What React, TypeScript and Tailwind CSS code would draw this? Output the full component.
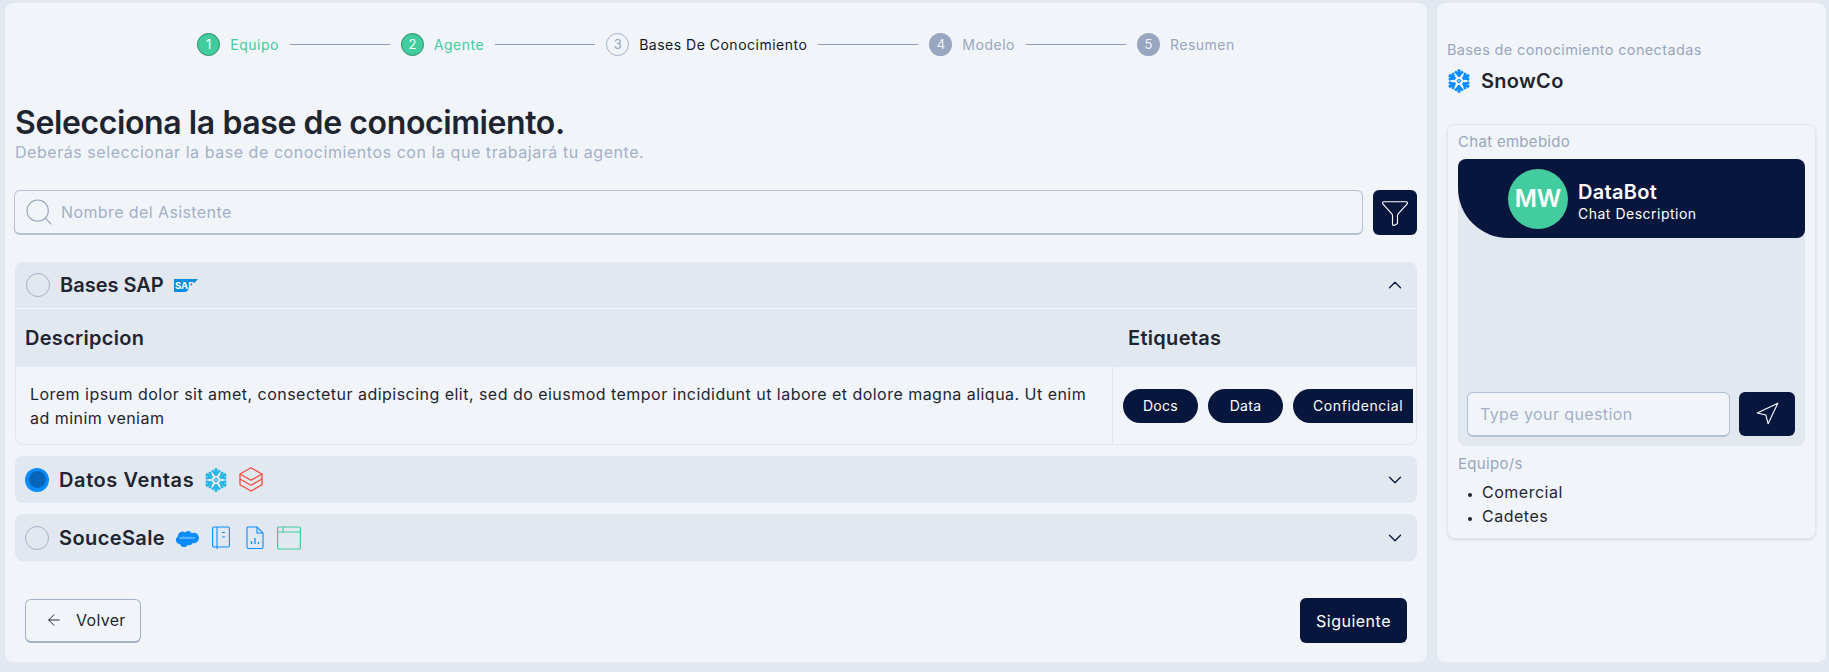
import { ArrowLeft, ChevronDown, ChevronUp, Filter, Navigation, Search } from "lucide-react";

const navy = "bg-[#07163d]";

function Snowflake({ color, size = 24 }: { color: string; size?: number }) {
  return (
    <svg width={size} height={size} viewBox="0 0 24 24" stroke={color} fill="none">
      {[0, 60, 120, 180, 240, 300].map((a) => (
        <g key={a} transform={`rotate(${a} 12 12)`}>
          <path d="M12 0.3v7.4" strokeWidth="3" />
          <path d="M8.100 2.400 12 6.300l3.900-3.900" strokeWidth="2.600" />
        </g>
      ))}
      <path d="M12 10.200 13.800 12 12 13.800 10.200 12Z" strokeWidth="1.100" />
    </svg>
  );
}

function Step({ n, label, state }: { n: number; label: string; state: "done" | "current" | "todo" }) {
  const circle =
    state === "done"
      ? "bg-[#43cc9e] border border-[#2a8a6c] text-white"
      : state === "current"
        ? "border border-[#a3b0c8] text-[#94a3b8]"
        : "bg-[#98a6bf] text-[#f1f5f9]";
  const text = state === "done" ? "text-[#43cc9e]" : state === "current" ? "text-[#111827]" : "text-[#98a6bf]";
  return (
    <div className="flex items-center gap-[10px]">
      <span className={`flex h-[23px] w-[23px] items-center justify-center rounded-full text-[13px] ${circle}`}>{n}</span>
      <span className={`text-[14px] tracking-[0.5px] ${text}`}>{label}</span>
    </div>
  );
}

function Line() {
  return <div className="mx-[11px] h-px w-[100px] bg-[#8c9cb8]" />;
}

function Radio({ checked }: { checked?: boolean }) {
  if (checked) {
    return (
      <span className="flex h-6 w-6 items-center justify-center rounded-full bg-[#0a8cff]">
        <span className="h-[17px] w-[17px] rounded-full bg-[#0665b8]" />
      </span>
    );
  }
  return <span className="h-6 w-6 rounded-full border border-[#a3b0c8]" />;
}

function Pill({ label, className }: { label: string; className: string }) {
  return (
    <span className={`flex h-[34px] items-center rounded-full ${navy} text-[14px] text-white ${className}`}>
      {label}
    </span>
  );
}

function SapLogo() {
  return (
    <svg width="24" height="13" viewBox="0 0 24 13">
      <path d="M0 0h24L12 13H0Z" fill="#0a8fe0" />
      <text x="1" y="9.500" fontSize="9.500" fontWeight="700" fill="#fff" fontFamily="Inter, sans-serif">
        SAP
      </text>
    </svg>
  );
}

function Layers() {
  return (
    <svg width="24" height="25" viewBox="0 0 24 25" fill="none" stroke="#ef4a3a" strokeWidth="1.3" strokeLinejoin="round">
      <path d="M12 0.800 23 7 12 13.200 1 7Z" />
      <path d="M1 7v5l11 6.200 11-6.200V7" />
      <path d="M1 12v5.800L12 24l11-6.200V12" />
    </svg>
  );
}

function Salesforce() {
  return (
    <svg width="24" height="17" viewBox="0 0 24 17" className="mt-[1px]">
      <path
        d="M10 2.4A4.2 4.2 0 0 1 13 1a4.3 4.3 0 0 1 3.7 2.2 5 5 0 0 1 2-.4A5.2 5.2 0 0 1 24 8a5.2 5.2 0 0 1-6.2 5.1 3.8 3.8 0 0 1-5 1.6A4.3 4.3 0 0 1 4.8 14 4 4 0 0 1 2.800 6.600 4.600 4.600 0 0 1 10 2.400Z"
        fill="#0a8cff"
      />
      <text x="12" y="9.300" textAnchor="middle" fontSize="3.200" fill="#cfe8ff" fontFamily="Inter, sans-serif">
        salesforce
      </text>
    </svg>
  );
}

function BookIcon() {
  return (
    <svg width="18" height="24" viewBox="0 0 18 24" fill="none" stroke="#0a8cff" strokeWidth="1.100">
      <rect x="0.6" y="1" width="16.800" height="20" rx="1.500" />
      <path d="M5 1v22" />
      <path d="M10 6.500h3M10 11h3" />
    </svg>
  );
}

function FileIcon() {
  return (
    <svg width="18" height="24" viewBox="0 0 18 24" fill="none" stroke="#0a8cff" strokeWidth="1.100">
      <path d="M2 1h9l6 6v14a1.500 1.500 0 0 1-1.500 1.500h-13A1.500 1.500 0 0 1 1 21V2a1 1 0 0 1 1-1Z" />
      <path d="M11 1v6h6" />
      <path d="M5.500 18v-3M9 18v-6M12.500 18v-2" strokeWidth="1.300" />
    </svg>
  );
}

function WindowIcon() {
  return (
    <svg width="24" height="24" viewBox="0 0 24 24" fill="none" stroke="#43cc9e" strokeWidth="1.200">
      <rect x="0.600" y="1" width="22.800" height="22" rx="1" />
      <path d="M0.600 6h22.800M6 1v5" />
    </svg>
  );
}

function Row({ name, checked, icons, nameClass }: { name: string; checked?: boolean; icons: React.ReactNode; nameClass: string }) {
  return (
    <div className="flex h-[47px] items-center rounded-lg bg-[#e2e8f0] pl-[10px] pr-[11px]">
      <Radio checked={checked} />
      <span className={`ml-[10px] text-[20px] font-semibold text-[#1f2530] ${nameClass}`}>{name}</span>
      <div className="ml-[10px] flex items-center">{icons}</div>
      <ChevronDown size={22} strokeWidth={1.4} className="ml-auto text-[#07163d]" />
    </div>
  );
}

export default function App() {
  return (
    <div className="flex h-[672px] w-[1829px] gap-[10px] overflow-hidden bg-[#e2e8f0] pb-[10px] pl-[5px] pr-[3px] pt-[3px] font-['Inter',sans-serif]">
      <main className="flex w-[1423px] flex-col rounded-lg bg-[#f1f5f9] pl-[10px] pr-[10px]">
        <div className="mt-[30px] flex items-center justify-center">
          <Step n={1} label="Equipo" state="done" />
          <Line />
          <Step n={2} label="Agente" state="done" />
          <Line />
          <Step n={3} label="Bases De Conocimiento" state="current" />
          <Line />
          <Step n={4} label="Modelo" state="todo" />
          <Line />
          <Step n={5} label="Resumen" state="todo" />
        </div>

        <h1 className="mt-[48px] text-[32px] font-semibold leading-[38px] tracking-[-0.4px] text-[#1f2530]">Selecciona la base de conocimiento.</h1>
        <p className="-mt-[2px] text-[16px] leading-[24px] tracking-[0.55px] text-[#a3b0c8]">Deberás seleccionar la base de conocimientos con la que trabajará tu agente.</p>

        <div className="-ml-px mt-[26px] flex h-[45px] gap-[10px]">
          <div className="flex flex-1 items-center rounded-md border border-b-2 border-[#b4c0d3] pl-[8px]">
            <Search size={32} strokeWidth={0.8} className="text-[#94a3b8]" />
            <span className="ml-[6px] text-[16px] tracking-[0.4px] text-[#a3b0c8]">Nombre del Asistente</span>
          </div>
          <button className={`flex h-[45px] w-[44px] items-center justify-center rounded-md ${navy}`}>
            <Filter size={30} strokeWidth={0.9} className="-scale-x-100 text-white" />
          </button>
        </div>

        <section className="mt-[27px] overflow-hidden rounded-lg border border-t-0 border-[#e2e8f0]">
          <div className="flex h-[47px] items-center border-b border-[#f1f5f9] bg-[#e2e8f0] pl-[10px] pr-[10px]">
            <Radio />
            <span className="ml-[10px] text-[20px] font-semibold text-[#1f2530]">Bases SAP</span>
            <span className="ml-[10px]">
              <SapLogo />
            </span>
            <ChevronUp size={22} strokeWidth={1.4} className="ml-auto text-[#07163d]" />
          </div>
          <div className="flex h-[58px] items-center bg-[#e2e8f0] text-[20px] font-semibold tracking-[0.3px] text-[#1f2530]">
            <span className="w-[1097px] pl-[9px]">Descripcion</span>
            <span className="pl-[15px]">Etiquetas</span>
          </div>
          <div className="flex h-[77px]">
            <p className="flex w-[1097px] items-center border-r border-[#e2e8f0] px-[14px] text-[16px] leading-[24px] tracking-[0.47px] text-[#1f2530]">
              Lorem ipsum dolor sit amet, consectetur adipiscing elit, sed do eiusmod tempor incididunt ut labore et dolore magna aliqua. Ut enim ad minim veniam
            </p>
            <div className="flex flex-1 items-center gap-[10px] pl-[10px]">
              <Pill label="Docs" className="w-[75px] justify-center tracking-[0.3px]" />
              <Pill label="Data" className="w-[75px] justify-center tracking-[0.3px]" />
              <Pill label="Confidencial" className="w-[120px] rounded-r-sm pl-[20px] tracking-[0.6px]" />
            </div>
          </div>
        </section>

        <div className="mt-[11px]">
          <Row
            name="Datos Ventas"
            nameClass="tracking-[0.6px]"
            checked
            icons={
              <div className="flex items-center gap-[11px]">
                <Snowflake color="#29b5e8" />
                <Layers />
              </div>
            }
          />
        </div>
        <div className="mt-[11px]">
          <Row
            name="SouceSale"
            nameClass="tracking-[0.4px]"
            icons={
              <div className="flex items-center">
                <Salesforce />
                <span className="ml-[13px]"><BookIcon /></span>
                <span className="ml-[16px]"><FileIcon /></span>
                <span className="ml-[13px]"><WindowIcon /></span>
              </div>
            }
          />
        </div>

        <div className="mt-[37px] flex items-center justify-between pl-[10px] pr-[10px]">
          <button className="flex h-[44px] w-[116px] items-center rounded-md border border-b-2 border-[#a3b0c8] pl-[19px] text-[16px] tracking-[0.3px] text-[#1f2530]">
            <ArrowLeft size={18} strokeWidth={1.3} />
            <span className="ml-[13px]">Volver</span>
          </button>
          <button className={`h-[45px] w-[107px] rounded-md ${navy} text-[16px] tracking-[0.5px] text-white`}>Siguiente</button>
        </div>
      </main>

      <aside className="flex-1 rounded-lg bg-[#f1f5f9] px-[10px]">
        <p className="mt-[38px] text-[14.5px] leading-[18px] tracking-[0.35px] text-[#98a6bf]">Bases de conocimiento conectadas</p>
        <div className="mt-[7px] flex items-center">
          <Snowflake color="#0a8cff" />
          <span className="ml-[10px] text-[20px] font-semibold tracking-[0.3px] text-[#1f2530]">SnowCo</span>
        </div>
        <div className="mt-[28px] w-[369px] rounded-lg border border-[#e2e8f0] px-[10px] pb-[10px] pt-[7px] shadow">
          <p className="text-[15px] leading-[20px] tracking-[0.3px] text-[#98a6bf]">Chat embebido</p>
          <div className="mt-[7px] flex h-[287px] flex-col rounded-lg bg-[#e2e8f0]">
            <div className={`flex h-[79px] items-center rounded-[8px] rounded-bl-[50px] ${navy} pl-[50px]`}>
              <span className="flex h-[60px] w-[60px] items-center justify-center rounded-full bg-[#43cc9e] text-[24px] font-semibold text-white">MW</span>
              <div className="ml-[10px] mt-[5px] text-white">
                <p className="text-[20px] font-semibold leading-[24px] tracking-[0.3px]">DataBot</p>
                <p className="mt-[1px] text-[14px] leading-[18px] tracking-[0.5px]">Chat Description</p>
              </div>
            </div>
            <div className="mt-auto flex gap-[9px] pb-[9px] pl-[9px] pr-[10px]">
              <div className="flex h-[45px] flex-1 items-center rounded-md border border-b-2 border-[#b4c0d3] bg-[#f1f5f9] pl-[12px] text-[16px] tracking-[0.4px] text-[#a3b0c8]">Type your question</div>
              <button className={`flex h-[44px] w-[56px] items-center justify-center rounded-md ${navy}`}>
                <Navigation size={26} strokeWidth={1} className="text-white" />
              </button>
            </div>
          </div>
          <p className="mt-[8px] text-[15px] leading-[20px] tracking-[0.3px] text-[#98a6bf]">Equipo/s</p>
          <ul className="mt-[6px] list-disc pl-[24px] text-[16px] leading-[24px] tracking-[0.5px] text-[#1f2530] marker:text-[11px]">
            <li>Comercial</li>
            <li>Cadetes</li>
          </ul>
        </div>
      </aside>
    </div>
  );
}
